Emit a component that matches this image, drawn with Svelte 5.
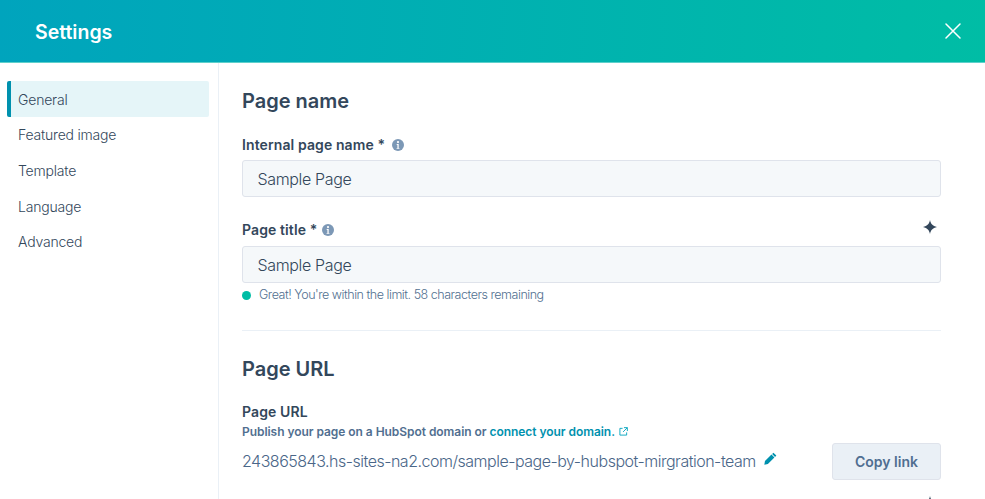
<script>
  const nav = ['General', 'Featured image', 'Template', 'Language', 'Advanced'];
</script>

<div class="page">
  <header class="top">
    <h1>Settings</h1>
    <button class="close" aria-label="Close">
      <svg viewBox="0 0 16 16" width="16" height="16"><path d="M1 1 15 15M15 1 1 15" stroke="#fff" stroke-width="1.5" fill="none" stroke-linecap="round"/></svg>
    </button>
  </header>
  <div class="body">
    <nav class="side">
      {#each nav as item, i}
        <div class="item" class:active={i === 0}>{item}</div>
      {/each}
    </nav>
    <main class="content">
      <h2 class="first">Page name</h2>
      <div class="label lab1">Internal page name *
        <svg class="info" viewBox="0 0 12 12" width="12" height="12"><circle cx="6" cy="6" r="6" fill="#7c98b6"/><circle cx="6" cy="3.1" r="1.1" fill="#fff"/><path d="M4.7 5h2v3.9h.7v.9H4.6v-.9h.8V5.900h-.7z" fill="#fff"/></svg>
      </div>
      <div class="field">Sample Page</div>
      <div class="titlerow">
        <div class="label">Page title *
          <svg class="info tight" viewBox="0 0 12 12" width="12" height="12"><circle cx="6" cy="6" r="6" fill="#7c98b6"/><circle cx="6" cy="3.1" r="1.1" fill="#fff"/><path d="M4.7 5h2v3.9h.7v.9H4.6v-.9h.8V5.900h-.7z" fill="#fff"/></svg>
        </div>
        <svg class="spark" viewBox="0 0 14 14" width="14" height="14"><path d="M7 0C7.800 4 9.500 5.800 14 7 9.500 8.200 7.800 10 7 14 6.200 10 4.500 8.200 0 7 4.500 5.800 6.200 4 7 0Z" fill="#33475b"/></svg>
      </div>
      <div class="field">Sample Page</div>
      <div class="status"><span class="dot"></span>Great! You're within the limit. 58 characters remaining</div>
      <hr />
      <h2>Page URL</h2>
      <div class="label lab3">Page URL</div>
      <div class="help">Publish your page on a HubSpot domain or <span class="link">connect your domain.</span>
        <svg class="ext" viewBox="0 0 10 10" width="9" height="9"><path d="M4 1.500H1v7.500h7.500V6M5.500 .7h3.800v3.800M9.200 .8 4.500 5.500" stroke="#00a4bd" stroke-width="1" fill="none"/></svg>
      </div>
      <div class="urlrow">
        <div class="url">243865843.hs-sites-na2.com/sample-page-by-hubspot-mirgration-team<svg class="pencil" viewBox="0 0 12 12" width="13" height="13"><path d="M8.700.6 11.400 3.300 10.200 4.500 7.500 1.800ZM6.900 2.400 9.600 5.100 3.600 11.100.3 11.700.9 8.400Z" fill="#0091ae"/></svg></div>
        <button class="copy">Copy link</button>
      </div>
      <div class="sparkrow">
        <svg class="spark" viewBox="0 0 14 14" width="14" height="14"><path d="M7 0C7.800 4 9.500 5.800 14 7 9.500 8.200 7.800 10 7 14 6.200 10 4.500 8.200 0 7 4.500 5.800 6.200 4 7 0Z" fill="#33475b"/></svg>
      </div>
    </main>
  </div>
</div>

<style>
  :global(body) { margin: 0; background: #fff; }
  .page {
    width: 985px; height: 499px; overflow: hidden; display: flex; flex-direction: column;
    font-family: Inter, "Liberation Sans", sans-serif; color: #33475b;
  }
  .top {
    height: 63px; box-sizing: border-box; flex: none; border-bottom: 1px solid #5fd0cb;
    background: linear-gradient(93deg, #00a4bd 0%, #00bda5 100%);
    display: flex; align-items: center; justify-content: space-between;
    padding: 0 24px 0 35px;
  }
  h1 { margin: 1px 0 0; color: #fff; font-size: 19.500px; font-weight: 600; }
  .close { background: none; border: 0; padding: 0; display: flex; }
  .body { flex: 1; display: flex; min-height: 0; }
  .side {
    width: 219px; flex: none; box-sizing: border-box; border-right: 1px solid #eaf0f6;
    padding: 18px 9px 0 7px;
  }
  .item {
    height: 35.7px; display: flex; align-items: center; padding-left: 7px;
    font-size: 14px; letter-spacing: -.2px; font-weight: 300; color: #33475b; border-left: 4px solid transparent;
    border-radius: 2px;
  }
  .active { background: #e5f5f8; border-left-color: #0091ae; height: 36px; }
  .content { flex: 1; padding: 0 44px 0 23px; min-width: 0; }
  h2 { margin: 0; font-size: 20px; font-weight: 600; line-height: 26px; }
  h2.first { margin-top: 25px; }
  .label { font-size: 14px; font-weight: 600; letter-spacing: .1px; line-height: 20px; display: flex; align-items: center; }
  .lab1 { margin-top: 21px; margin-bottom: 5px; }
  .info { margin-left: 7px; }
  .info.tight { margin-left: 5px; }
  .field {
    height: 37px; box-sizing: border-box; background: #f5f8fa; border: 1px solid #dfe3eb; border-radius: 3px;
    padding-left: 14.500px; display: flex; align-items: center; font-size: 16px; letter-spacing: -.35px; font-weight: 300;
  }
  .titlerow { display: flex; justify-content: space-between; align-items: flex-start; margin-top: 23px; height: 26px; }
  .spark { display: block; margin-right: 4px; }
  .status { display: flex; align-items: center; font-size: 12.500px; letter-spacing: -.47px; font-weight: 300; color: #516f90; margin-top: 4px; line-height: 16px; }
  .dot { width: 9px; height: 9px; border-radius: 50%; background: #00bda5; margin-right: 8px; }
  hr { border: 0; border-top: 1px solid #eaf0f6; margin: 27px 0 25px; }
  .lab3 { margin-top: 20px; }
  .help { font-size: 12px; font-weight: 600; letter-spacing: -.05px; color: #516f90; line-height: 19px; }
  .link { color: #0091ae; }
  .ext { margin-left: 1px; }
  .urlrow { display: flex; justify-content: space-between; align-items: center; margin-top: 2px; height: 37px; }
  .url { font-size: 16px; letter-spacing: -.49px; font-weight: 300; color: #4a6688; white-space: nowrap; padding-bottom: 2px; }
  .pencil { margin-left: 8px; vertical-align: 2px; }
  .copy {
    width: 109px; height: 37px; font: inherit; font-size: 14px; font-weight: 600;
    color: #506e91; background: #eaf0f6; border: 1px solid #dfe3eb; border-radius: 3px;
  }
  .sparkrow { display: flex; justify-content: flex-end; margin-top: 16px; }
</style>
